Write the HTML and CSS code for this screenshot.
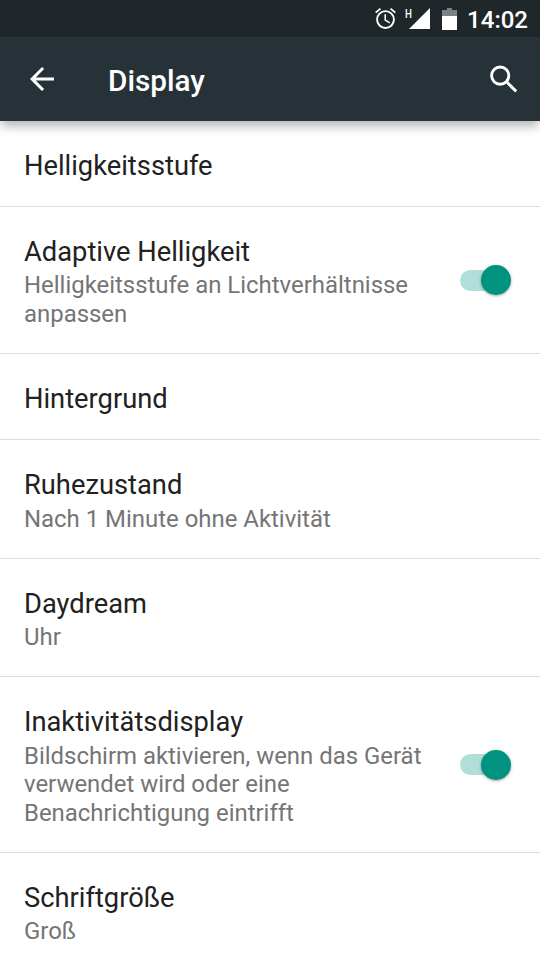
FILE: index.html
```html
<!DOCTYPE html>
<html lang="de">
<head>
<meta charset="utf-8">
<title>Display</title>
<link rel="stylesheet" href="styles.css">
</head>
<body>
<div class="status">
  <svg class="alarm" viewBox="0 0 24 24"><path d="M22 5.72l-4.6-3.86-1.1 1.32 4.6 3.86L22 5.72zM7.7 3.18L6.6 1.86 2 5.71l1.1 1.32 4.6-3.85zM12.5 8H11v6l4.75 2.85.75-1.23-4-2.37V8zM12 4a9 9 0 1 0 0 18 9 9 0 0 0 0-18zm0 16.2a7.2 7.2 0 1 1 0-14.4 7.2 7.2 0 0 1 0 14.4z"/></svg>
  <div class="signal"><span class="net">H</span><svg width="21" height="21" viewBox="0 0 22 22"><path d="M22 0v22H0z"/></svg></div>
  <svg class="battery" width="15" height="22" viewBox="0 0 15 22"><path d="M5 0h5v2h5v6H0V2h5z" opacity=".42"/><path d="M0 8h15v14H0z"/></svg>
  <span class="time">14:02</span>
</div>
<header class="bar">
  <svg class="back" width="36" height="36" viewBox="0 0 24 24"><path d="M20 11H7.83l5.59-5.59L12 4l-8 8 8 8 1.41-1.41L7.83 13H20v-2z"/></svg>
  <h1 class="title">Display</h1>
  <svg class="search" width="36" height="36" viewBox="0 0 36 36"><circle cx="14.2" cy="14.6" r="8.6"/><path d="M20.4 20.8l9.8 9.6"/></svg>
</header>
<main class="list">
  <section class="row r1"><div class="text"><h2>Helligkeitsstufe</h2></div></section>
  <section class="row r2"><div class="text"><h2>Adaptive Helligkeit</h2><p>Helligkeitsstufe an Lichtverhältnisse<br>anpassen</p></div><div class="toggle"><i class="knob"></i></div></section>
  <section class="row r3"><div class="text"><h2>Hintergrund</h2></div></section>
  <section class="row r4"><div class="text"><h2>Ruhezustand</h2><p>Nach 1 Minute ohne Aktivität</p></div></section>
  <section class="row r5"><div class="text"><h2>Daydream</h2><p>Uhr</p></div></section>
  <section class="row r6"><div class="text"><h2>Inaktivitätsdisplay</h2><p>Bildschirm aktivieren, wenn das Gerät<br>verwendet wird oder eine<br>Benachrichtigung eintrifft</p></div><div class="toggle"><i class="knob"></i></div></section>
  <section class="row r7"><div class="text"><h2>Schriftgröße</h2><p>Groß</p></div></section>
</main>
</body>
</html>
```
FILE: styles.css
```css
* { box-sizing: border-box; }
body { margin: 0; width: 540px; height: 960px; overflow: hidden; background: #fff; font-family: Roboto, "Noto Sans", sans-serif; display: flex; flex-direction: column; }
h1, h2, p { margin: 0; }
svg { display: block; fill: #fff; flex: none; }
.status { height: 37px; flex: none; background: #1f272a; display: flex; align-items: center; justify-content: flex-end; padding-right: 12px; color: #fff; }
.alarm { width: 25px; height: 25px; margin-right: 7px; }
.signal { display: flex; position: relative; width: 25px; justify-content: flex-end; margin-right: 12px; }
.net { position: absolute; left: 0; top: 0; font-size: 13px; line-height: 12px; font-weight: 500; transform: scaleX(.75); transform-origin: left; }
.battery { margin-right: 10px; }
.time { font-size: 24px; line-height: 36px; font-weight: 500; padding-top: 2px; }
.bar { height: 84px; flex: none; background: #263238; color: #fff; display: flex; align-items: center; padding: 0 18px 0 24px; box-shadow: 0 6px 10px -1px rgba(0,0,0,.3); position: relative; }
.search { fill: none; stroke: #fff; stroke-width: 2.9; }
.title { flex: 1; margin-left: 48px; font-size: 29.7px; line-height: 36px; font-weight: 500; padding-top: 3px; }
.list { flex: none; }
.row { display: flex; align-items: center; padding: 0 29.5px 0 24px; border-bottom: 1px solid #dedede; }
.text { flex: 1; padding-top: 3px; }
h2 { font-size: 27.3px; line-height: 34px; font-weight: 400; color: #212121; }
p { font-size: 23.93px; line-height: 28.4px; color: #757575; white-space: nowrap; padding-top: 2.6px; }
.r1 { height: 86px; }
.r2 { height: 147px; }
.r3 { height: 86px; }
.r1 .text, .r3 .text { padding-top: 5px; }
.r4 { height: 119px; }
.r5 { height: 118px; }
.r6 { height: 176px; }
.r7 { height: 118px; }
.toggle { flex: none; width: 50.5px; height: 21px; border-radius: 11px; background: #b0ded9; display: flex; align-items: center; justify-content: flex-end; }
.knob { width: 30px; height: 30px; border-radius: 50%; background: #009380; box-shadow: 0 1px 3px rgba(0,0,0,.35); }
```
